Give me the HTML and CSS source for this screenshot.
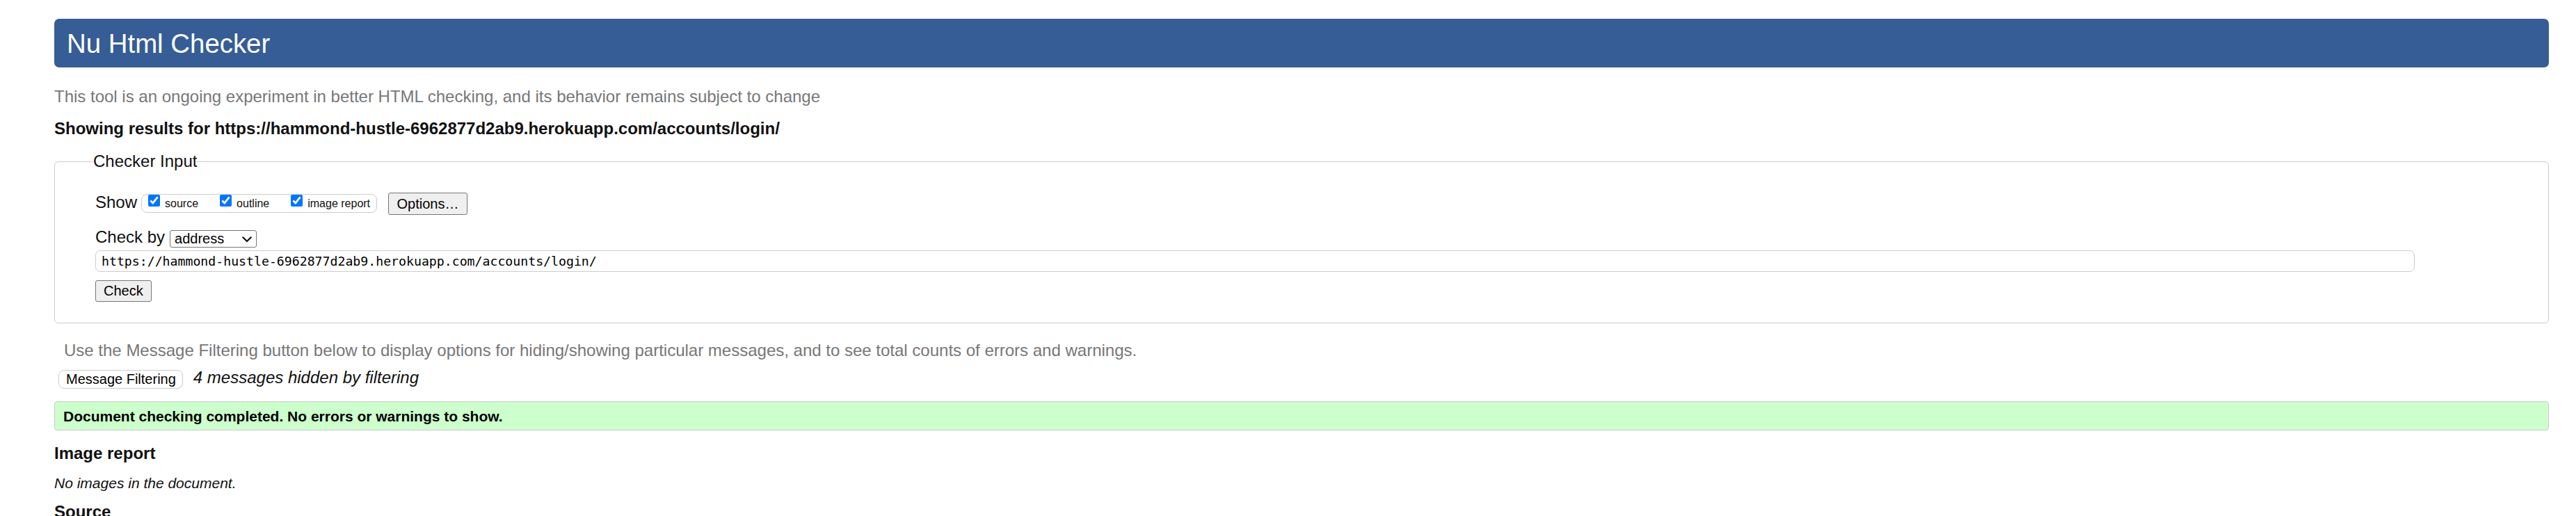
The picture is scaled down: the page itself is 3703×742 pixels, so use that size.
FILE: index.html
```html
<!DOCTYPE html>
<html lang="en">
<head>
<meta charset="utf-8">
<title>Showing results for https://hammond-hustle-6962877d2ab9.herokuapp.com/accounts/login/ - Nu Html Checker</title>
<link rel="stylesheet" href="styles.css">
</head>
<body>
<h1 class="title">Nu Html Checker</h1>
<p class="intro">This tool is an ongoing experiment in better HTML checking, and its behavior remains subject to change</p>
<p class="showing">Showing results for https://hammond-hustle-6962877d2ab9.herokuapp.com/accounts/login/</p>
<form class="checker-form">
  <fieldset class="checker-input">
    <legend class="legend">Checker Input</legend>
    <div class="show-row">
      <span class="label">Show</span>
      <span class="show-group">
        <label class="opt"><input type="checkbox" class="cb" checked><span class="opt-text">source</span></label>
        <label class="opt"><input type="checkbox" class="cb" checked><span class="opt-text">outline</span></label>
        <label class="opt"><input type="checkbox" class="cb" checked><span class="opt-text">image report</span></label>
      </span>
      <button type="button" class="btn btn-options">Options…</button>
    </div>
    <div class="checkby-row">
      <span class="label">Check by</span>
      <span class="select"><span class="select-text">address</span><svg class="chevron" width="14" height="9" viewBox="0 0 14 9"><path d="M1.3 1.3 L7 7 L12.7 1.3" fill="none" stroke="#111" stroke-width="2.2" stroke-linecap="round" stroke-linejoin="round"/></svg></span>
    </div>
    <div class="url-row">
      <input class="url" type="text" value="https://hammond-hustle-6962877d2ab9.herokuapp.com/accounts/login/">
    </div>
    <div class="check-row">
      <button type="button" class="btn btn-check">Check</button>
    </div>
  </fieldset>
</form>
<p class="filter-info">Use the Message Filtering button below to display options for hiding/showing particular messages, and to see total counts of errors and warnings.</p>
<div class="filter-row">
  <button type="button" class="btn btn-filter">Message Filtering</button>
  <span class="hidden-count">4 messages hidden by filtering</span>
</div>
<div class="result">Document checking completed. No errors or warnings to show.</div>
<h2 class="section-title">Image report</h2>
<p class="no-images">No images in the document.</p>
<h2 class="section-title section-source">Source</h2>
</body>
</html>
```

FILE: styles.css
```css
html {
  background: #fff;
  overflow: hidden;
}

body {
  margin: 0 39px 0 78px;
  font-family: "Liberation Sans", Arial, sans-serif;
  font-size: 24px;
  line-height: 28px;
  color: #111;
}

.title {
  margin: 27px 0 0;
  height: 70px;
  box-sizing: border-box;
  padding: 14px 18px 12px;
  background: #365d95;
  color: #fff;
  font-size: 38.4px;
  line-height: 44px;
  font-weight: normal;
  border-radius: 7px;
}

.intro {
  margin: 28px 0 0;
  color: #777;
}

.showing {
  margin: 18px 0 0;
  font-weight: bold;
}

.checker-form {
  margin: 19px 0 0;
}

.checker-input {
  margin: 0;
  min-width: 0;
  border: 1px solid #ccc;
  border-radius: 6px;
  padding: 31px 58px 30px;
}

.legend {
  padding: 0;
  margin-left: -3px;
  line-height: 28px;
}

.show-row {
  display: flex;
  align-items: flex-start;
  height: 32px;
}

.label {
  line-height: 28px;
}

.show-group {
  display: flex;
  align-items: flex-start;
  gap: 31px;
  box-sizing: border-box;
  height: 27px;
  margin: 2px 0 0 6px;
  padding: 0 9px;
  border: 1px solid #ccc;
  border-radius: 8px;
}

.opt {
  display: flex;
  align-items: flex-start;
}

.cb {
  width: 17px;
  height: 17px;
  margin: 0 7px 0 0;
  accent-color: #0075ff;
}

.opt-text {
  font-size: 16px;
  line-height: 18px;
  margin-top: 4px;
}

.btn {
  font-family: "Liberation Sans", Arial, sans-serif;
  font-size: 20px;
  line-height: 23px;
  color: #000;
  background: #efefef;
  border: 1px solid #767676;
  border-radius: 3px;
  box-sizing: border-box;
}

.btn-options {
  height: 32px;
  margin-left: 16px;
  padding: 0 11.5px;
}

.checkby-row {
  display: flex;
  align-items: flex-start;
  margin-top: 18px;
}

.select {
  display: flex;
  align-items: center;
  justify-content: space-between;
  box-sizing: border-box;
  width: 125px;
  height: 25px;
  margin: 4px 0 0 7px;
  padding: 0 6px;
  border: 1px solid #767676;
  border-radius: 3px;
  font-size: 20px;
  line-height: 23px;
  color: #000;
}

.chevron {
  display: block;
  margin-top: 1px;
}

.url-row {
  margin-top: 4px;
}

.url {
  display: block;
  box-sizing: border-box;
  width: calc(100% - 134px);
  height: 31px;
  margin: 0;
  padding: 0 8px;
  border: 1px solid #ccc;
  border-radius: 7px;
  font-family: "DejaVu Sans Mono", "Liberation Mono", monospace;
  font-size: 18.2px;
  color: #000;
  background: #fff;
}

.check-row {
  margin-top: 12px;
}

.btn-check {
  height: 31px;
  padding: 0 11px;
}

.filter-info {
  margin: 25px 0 0 14px;
  color: #777;
}

.filter-row {
  display: flex;
  align-items: flex-start;
  margin-top: 14px;
}

.btn-filter {
  height: 27px;
  margin-left: 6px;
  padding: 0 9px 0 10px;
  background: #fff;
  border: 1px solid #ccc;
  border-radius: 8px;
}

.hidden-count {
  font-style: italic;
  margin: -3px 0 0 15px;
}

.result {
  margin-top: 18px;
  box-sizing: border-box;
  height: 42px;
  padding: 9px 12px 7px;
  border: 1px solid #ccc;
  border-radius: 4px;
  background: #ccffcc;
  font-weight: bold;
  font-size: 21px;
  line-height: 24px;
  color: #000;
}

.section-title {
  margin: 19px 0 0;
  font-size: 24px;
  line-height: 28px;
  font-weight: bold;
}

.no-images {
  margin: 17px 0 0;
  font-style: italic;
  font-size: 21px;
  line-height: 24px;
}

.section-source {
  margin-top: 15px;
}
```
